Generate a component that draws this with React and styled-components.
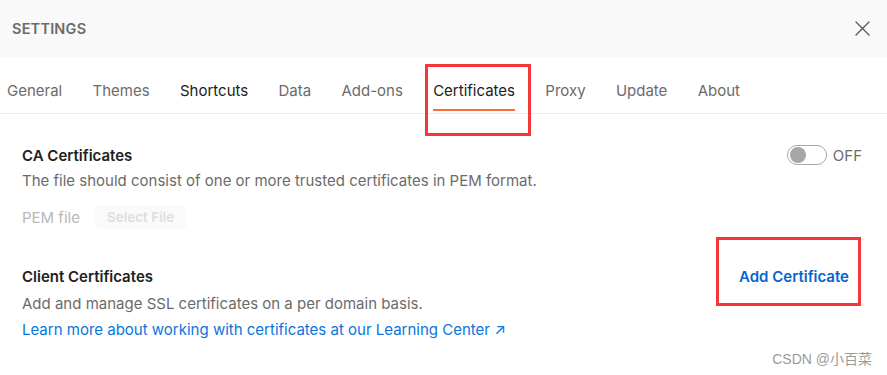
import styled, { createGlobalStyle } from "styled-components";

const GlobalStyle = createGlobalStyle`
  html, body {
    margin: 0;
    padding: 0;
    background: #ffffff;
  }
  body {
    font-family: Inter, "Noto Sans", sans-serif;
    -webkit-font-smoothing: antialiased;
  }
`;

const Wrap = styled.div`
  width: 887px;
  height: 375px;
  overflow: hidden;
  position: relative;
  background: #ffffff;
`;

const Header = styled.div`
  height: 57px;
  background-color: #f9f9f9;
  display: flex;
  align-items: center;
  justify-content: space-between;
  padding: 0 16px 0 12px;
  .title {
    font-weight: 600;
    font-size: 14.5px;
    color: #6b6b6b;
    letter-spacing: 0.2px;
  }
`;

const CloseButton = styled.button`
  border: none;
  background: transparent;
  padding: 0;
  width: 18px;
  height: 18px;
  display: flex;
  align-items: center;
  justify-content: center;
  cursor: pointer;
`;

const TabBar = styled.div`
  height: 56px;
  display: flex;
  align-items: stretch;
  gap: 30.3px;
  padding-left: 7px;
  border-bottom: 1px solid #ededed;
`;

const Tab = styled.div`
  position: relative;
  display: flex;
  align-items: center;
  padding-top: 10px;
  font-size: 15px;
  color: ${(p) => (p.$active || p.$dark ? "#212121" : "#6b6b6b")};
  &::after {
    content: "";
    display: ${(p) => (p.$active ? "block" : "none")};
    position: absolute;
    left: 0;
    right: 0;
    bottom: 2px;
    height: 2px;
    background: #ff6c37;
  }
`;

const Highlight = styled.div`
  position: absolute;
  border: 3px solid #f5373b;
  box-sizing: border-box;
  pointer-events: none;
`;

const Content = styled.div`
  padding: 30px 26px 0 22px;
  display: flex;
  flex-direction: column;
`;

const Section = styled.div`
  display: flex;
  flex-direction: column;
  margin-bottom: ${(p) => p.$gap || 0}px;
`;

const Row = styled.div`
  display: flex;
  align-items: center;
  justify-content: space-between;
  height: 22px;
`;

const Heading = styled.div`
  font-size: 15px;
  font-weight: 600;
  color: #212121;
`;

const Desc = styled.div`
  font-size: 15px;
  color: #6b6b6b;
  line-height: 26px;
  margin-top: ${(p) => p.$mt || 0}px;
`;

const FileRow = styled.div`
  display: flex;
  align-items: center;
  gap: 15px;
  margin-top: 11px;
  span {
    font-size: 15px;
    color: #b8b8b8;
  }
`;

const GhostButton = styled.button`
  border: none;
  border-radius: 4px;
  background: #fafafa;
  color: #dedede;
  font-family: inherit;
  font-weight: 600;
  font-size: 13.5px;
  height: 24px;
  padding: 0 12px;
`;

const ToggleWrap = styled.div`
  display: flex;
  align-items: center;
  gap: 6px;
  margin-right: -1px;
  span {
    font-size: 15px;
    color: #6b6b6b;
  }
`;

const Track = styled.div`
  width: 36px;
  height: 18px;
  border: 1px solid #a6a6a6;
  border-radius: 10px;
  display: flex;
  align-items: center;
  padding-left: 2px;
  box-sizing: content-box;
  .knob {
    width: 16px;
    height: 16px;
    border-radius: 50%;
    background: #a6a6a6;
  }
`;

const TextButton = styled.button`
  border: none;
  background: transparent;
  padding: 0;
  font-family: inherit;
  font-size: 15px;
  font-weight: 600;
  color: #0265d2;
  margin-right: 12px;
  cursor: pointer;
`;

const Link = styled.a`
  font-size: 15px;
  color: #0b74de;
  text-decoration: none;
  line-height: 26px;
`;

const Watermark = styled.div`
  position: absolute;
  right: 15px;
  bottom: 7px;
  font-family: "Liberation Sans", "Noto Sans CJK SC", sans-serif;
  font-size: 14px;
  color: #9a9a9a;
`;

const tabs = [
  { name: "General" },
  { name: "Themes" },
  { name: "Shortcuts", dark: true },
  { name: "Data" },
  { name: "Add-ons" },
  { name: "Certificates", active: true },
  { name: "Proxy" },
  { name: "Update" },
  { name: "About" },
];

const App = () => {
  return (
    <>
      <GlobalStyle />
      <Wrap>
        <Header>
          <div className="title">SETTINGS</div>
          <CloseButton aria-label="close">
            <svg width="15" height="15" viewBox="0 0 15 15">
              <path
                d="M1 1 L14 14 M14 1 L1 14"
                stroke="#5a5a5a"
                strokeWidth="1.4"
                strokeLinecap="round"
              />
            </svg>
          </CloseButton>
        </Header>

        <TabBar>
          {tabs.map((t) => (
            <Tab key={t.name} $active={t.active} $dark={t.dark}>
              {t.name}
            </Tab>
          ))}
        </TabBar>

        <Content>
          {/* CA certificates */}
          <Section $gap={36}>
            <Row>
              <Heading>CA Certificates</Heading>
              <ToggleWrap>
                <Track>
                  <div className="knob" />
                </Track>
                <span>OFF</span>
              </ToggleWrap>
            </Row>
            <Desc $mt={2}>
              The file should consist of one or more trusted certificates in PEM
              format.
            </Desc>
            <FileRow>
              <span>PEM file</span>
              <GhostButton>Select File</GhostButton>
            </FileRow>
          </Section>

          {/* client certificates */}
          <Section>
            <Row>
              <Heading>Client Certificates</Heading>
              <TextButton>Add Certificate</TextButton>
            </Row>
            <Desc $mt={4}>Add and manage SSL certificates on a per domain basis.</Desc>
            <Link href="#">
              Learn more about working with certificates at our Learning Center ↗
            </Link>
          </Section>
        </Content>

        <Highlight style={{ left: 425, top: 64, width: 106, height: 72 }} />
        <Highlight style={{ left: 716, top: 237, width: 145, height: 69 }} />

        <Watermark>CSDN @小百菜</Watermark>
      </Wrap>
    </>
  );
};

export default App;
